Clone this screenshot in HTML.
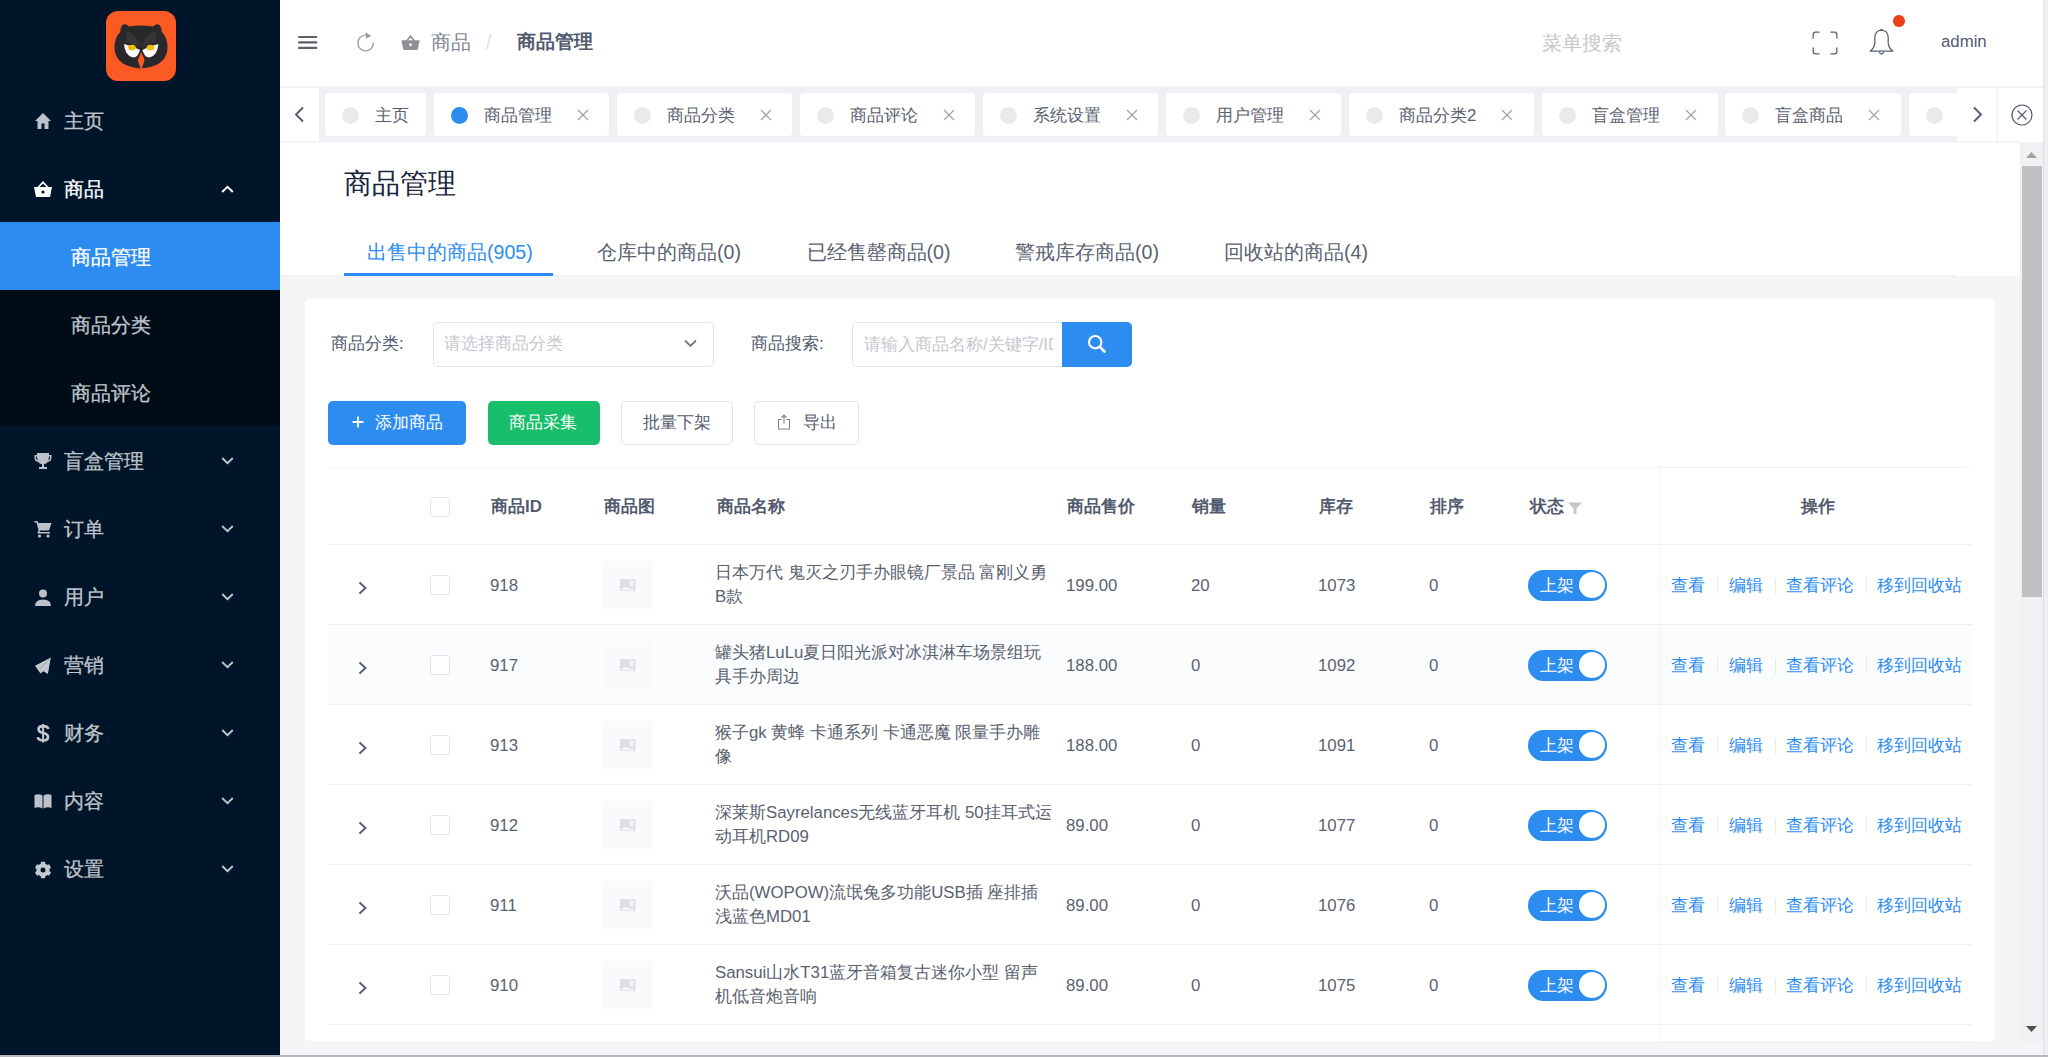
<!DOCTYPE html>
<html><head><meta charset="utf-8">
<style>
*{box-sizing:border-box;margin:0;padding:0}
html,body{width:2048px;height:1057px;overflow:hidden;background:#f5f5f8;font-family:"Liberation Sans",sans-serif;}
.a{position:absolute}
.t{position:absolute;white-space:nowrap;line-height:20px;}
svg{position:absolute;display:block}
/* sidebar */
#side{position:absolute;left:0;top:0;width:280px;height:1055px;background:#001529;}
.mi{position:absolute;left:64px;font-size:19.6px;color:#bfc3cb;-webkit-text-stroke:0.3px currentColor;}
.sub{position:absolute;left:71px;font-size:19.6px;color:#bfc3cb;-webkit-text-stroke:0.3px currentColor;}
.chev{position:absolute;left:221px;}
/* header */
#hdr{position:absolute;left:280px;top:0;width:1763px;height:88px;background:#fff;}
#tabsbar{position:absolute;left:280px;top:88px;width:1763px;height:53px;background:#f0f0f4;}
.tag{position:absolute;top:93px;height:43px;background:#fff;border-radius:4px;}
.tag .dot{position:absolute;left:17px;top:13.5px;width:17px;height:17px;border-radius:50%;background:#e8eaec;}
.tag .tx{position:absolute;top:13.2px;left:50px;font-size:16.8px;color:#5a6170;line-height:20px;white-space:nowrap}
.tag .x{position:absolute;top:16px;}
/* content */
#ctop{position:absolute;left:280px;top:142px;width:1740px;height:134px;background:#fff;}
#card{position:absolute;left:305px;top:299px;width:1690px;height:742px;background:#fff;border-radius:5px;}
.lbl{font-size:16.8px;color:#515a6e}
.btn{position:absolute;top:401px;height:44px;border-radius:5px;}
.th{font-size:16.8px;color:#515a6e;font-weight:bold}
.td{font-size:16.8px;color:#5a6170}
.row{position:absolute;left:328px;width:1644px;height:80px;border-bottom:1px solid #eeeff1;}
.cb{position:absolute;left:430px;width:20px;height:20px;border:1px solid #e4e6e9;border-radius:3px;background:#fff}
.img{position:absolute;left:603px;width:49px;height:48px;background:#fafafc;}
.sw{position:absolute;left:1528px;width:79px;height:31px;border-radius:16px;background:#2d8cf0;}
.sw .k{position:absolute;right:2px;top:2.5px;width:26px;height:26px;border-radius:50%;background:#fff}
.sw .tx{position:absolute;left:12px;top:6px;font-size:16.8px;line-height:20px;color:#fff}
.act{font-size:16.8px;color:#2d8cf0}
.sep{position:absolute;width:1px;height:16px;background:#e8eaec}
</style></head><body>

<!-- SIDEBAR -->
<div id="side">
  <div class="a" style="left:0;top:222px;width:280px;height:204px;background:#000c17"></div>
  <div class="a" style="left:0;top:222px;width:280px;height:68px;background:#2d8cf0"></div>
  <!-- logo -->
  <svg style="left:106px;top:11px" width="70" height="70" viewBox="0 0 70 70">
    <rect x="0" y="0" width="70" height="70" rx="12" fill="#fc5a24"/>
    <path d="M16 14.5 Q19 11.5 23 15.5 Q35 13.5 47 15.5 Q51 11.5 54 14.5 Q56 17.5 55.5 20.5 Q62 27 61.5 38 Q60 55.5 35 57.5 Q10 55.5 8.5 38 Q8 27 14.5 20.5 Q14 17.5 16 14.5Z" fill="#29292b"/>
    <path d="M22 20 Q30 24 34 36 Q30 33 20 31 Q19 25 22 20Z M48 20 Q40 24 36 36 Q40 33 50 31 Q51 25 48 20Z" fill="#353538"/>
    <path d="M18 33 Q26 35 34 39 Q32 46.5 27 46.5 Q19 45 18 33Z" fill="#fff"/>
    <path d="M52.4 33 Q44.4 35 36.4 39 Q38.4 46.5 43.4 46.5 Q51.4 45 52.4 33Z" fill="#fff"/>
    <ellipse cx="26" cy="36.6" rx="3.9" ry="2.9" fill="#f0bd0e"/>
    <ellipse cx="44.4" cy="36.6" rx="3.9" ry="2.9" fill="#f0bd0e"/>
    <path d="M35.2 41 L31.8 49 L35.2 59.5 L38.6 49Z" fill="#fc5a24"/>
  </svg>
  <!-- icons -->
  <svg style="left:34px;top:112px" width="18" height="18" viewBox="0 0 18 18"><path d="M9 1 L1 9 H3.5 V17 H7.5 V11.5 H10.5 V17 H14.5 V9 H17Z" fill="#bdc2ca"/></svg>
  <div class="t mi" style="top:111.2px">主页</div>
  <svg style="left:33px;top:180px" width="20" height="18" viewBox="0 0 20 18"><path d="M10 1 L4 7.5 H6 L10 3.5 L14 7.5 H16Z" fill="#fff"/><path d="M1 7 H19 L17 17 H3Z" fill="#fff"/><circle cx="10" cy="12" r="1.6" fill="#001529"/></svg>
  <div class="t mi" style="top:179.2px;color:#fff">商品</div>
  <svg class="chev" style="top:185px" width="13" height="8" viewBox="0 0 13 8"><path d="M1.2 7 L6.5 1.8 L11.8 7" stroke="#fff" stroke-width="2" fill="none"/></svg>
  <div class="t sub" style="top:246.7px;color:#fff">商品管理</div>
  <div class="t sub" style="top:314.7px">商品分类</div>
  <div class="t sub" style="top:382.7px">商品评论</div>

  <svg style="left:34px;top:452px" width="18" height="18" viewBox="0 0 18 18"><path d="M3 1 H15 V3 H17.5 V6 Q17.5 9.5 13.8 10 Q12.5 12 10 12.3 V15 H13 V17 H5 V15 H8 V12.3 Q5.5 12 4.2 10 Q0.5 9.5 0.5 6 V3 H3Z M2 4.5 V6 Q2 8 3.8 8.4 Q3 6.5 3 4.5Z M16 4.5 H15 Q15 6.5 14.2 8.4 Q16 8 16 6Z" fill="#bdc2ca" fill-rule="evenodd"/></svg>
  <div class="t mi" style="top:451.2px">盲盒管理</div>
  <svg style="left:34px;top:520px" width="18" height="18" viewBox="0 0 18 18"><path d="M0.5 1 H3.5 L4.3 3 H17.5 L15 10.5 H6.2 L5.5 12 H16 V13.5 H3.2 L4.6 10.3 L2.5 2.5 H0.5Z" fill="#bdc2ca"/><circle cx="5.5" cy="16" r="1.6" fill="#bdc2ca"/><circle cx="14" cy="16" r="1.6" fill="#bdc2ca"/></svg>
  <div class="t mi" style="top:519.2px">订单</div>
  <svg style="left:34px;top:589px" width="18" height="17" viewBox="0 0 18 17"><circle cx="9" cy="4.5" r="4" fill="#bdc2ca"/><path d="M1 17 Q1 10.5 9 10.5 Q17 10.5 17 17Z" fill="#bdc2ca"/></svg>
  <div class="t mi" style="top:587.2px">用户</div>
  <svg style="left:34px;top:657px" width="18" height="18" viewBox="0 0 18 18"><path d="M16.8 0.4 L1 8.8 L6.5 16.6 L9.4 14.3 L13.9 17Z" fill="#c3c7ce"/><path d="M16.5 0.8 L6.2 11.5" stroke="#8f96a2" stroke-width="0.7"/></svg>
  <div class="t mi" style="top:655.2px">营销</div>
  <svg style="left:34px;top:722px" width="18" height="22" viewBox="0 0 18 22"><path d="M14.3 7 Q13.8 4.2 9 4.2 Q4.6 4.2 4.6 7.3 Q4.6 10 9.2 11 Q14 12 14 15.2 Q14 18.4 9 18.4 Q4.2 18.4 3.8 15.2" stroke="#c3c7ce" stroke-width="2.7" fill="none"/><path d="M9.1 2 V20.5" stroke="#c3c7ce" stroke-width="2"/></svg>
  <div class="t mi" style="top:723.2px">财务</div>
  <svg style="left:34px;top:793px" width="18" height="16" viewBox="0 0 18 16"><path d="M0.5 2 Q4.5 0.5 8.5 2.5 V15.5 Q4.5 13.5 0.5 15Z M17.5 2 Q13.5 0.5 9.5 2.5 V15.5 Q13.5 13.5 17.5 15Z" fill="#bdc2ca"/></svg>
  <div class="t mi" style="top:791.2px">内容</div>
  <svg style="left:34px;top:861px" width="18" height="18" viewBox="0 0 18 18"><path d="M5.70 3.28 L6.74 2.80 L6.97 0.85 L11.03 0.85 L11.26 2.80 L12.30 3.28 L13.24 3.94 L15.04 3.16 L17.07 6.68 L15.50 7.85 L15.60 9.00 L15.50 10.15 L17.07 11.32 L15.04 14.84 L13.24 14.06 L12.30 14.72 L11.26 15.20 L11.03 17.15 L6.97 17.15 L6.74 15.20 L5.70 14.72 L4.76 14.06 L2.96 14.84 L0.93 11.32 L2.50 10.15 L2.40 9.00 L2.50 7.85 L0.93 6.68 L2.96 3.16 L4.76 3.94Z M11.5 9 A2.5 2.5 0 1 0 6.5 9 A2.5 2.5 0 1 0 11.5 9Z" fill="#c3c7ce" fill-rule="evenodd"/></svg>
  <div class="t mi" style="top:859.2px">设置</div>
  <!-- down chevrons -->
  <svg class="chev" style="top:457px" width="13" height="8" viewBox="0 0 13 8"><path d="M1.2 1 L6.5 6.2 L11.8 1" stroke="#bdc2ca" stroke-width="2" fill="none"/></svg>
  <svg class="chev" style="top:525px" width="13" height="8" viewBox="0 0 13 8"><path d="M1.2 1 L6.5 6.2 L11.8 1" stroke="#bdc2ca" stroke-width="2" fill="none"/></svg>
  <svg class="chev" style="top:593px" width="13" height="8" viewBox="0 0 13 8"><path d="M1.2 1 L6.5 6.2 L11.8 1" stroke="#bdc2ca" stroke-width="2" fill="none"/></svg>
  <svg class="chev" style="top:661px" width="13" height="8" viewBox="0 0 13 8"><path d="M1.2 1 L6.5 6.2 L11.8 1" stroke="#bdc2ca" stroke-width="2" fill="none"/></svg>
  <svg class="chev" style="top:729px" width="13" height="8" viewBox="0 0 13 8"><path d="M1.2 1 L6.5 6.2 L11.8 1" stroke="#bdc2ca" stroke-width="2" fill="none"/></svg>
  <svg class="chev" style="top:797px" width="13" height="8" viewBox="0 0 13 8"><path d="M1.2 1 L6.5 6.2 L11.8 1" stroke="#bdc2ca" stroke-width="2" fill="none"/></svg>
  <svg class="chev" style="top:865px" width="13" height="8" viewBox="0 0 13 8"><path d="M1.2 1 L6.5 6.2 L11.8 1" stroke="#bdc2ca" stroke-width="2" fill="none"/></svg>
</div>

<!-- HEADER -->
<div id="hdr"></div>
<!-- hamburger -->
<svg style="left:298px;top:35px" width="20" height="15" viewBox="0 0 20 15"><rect x="0" y="1" width="19.3" height="2.1" rx="1" fill="#5b6069"/><rect x="0" y="6.3" width="19.3" height="2.1" rx="1" fill="#5b6069"/><rect x="0" y="11.8" width="19.3" height="2.1" rx="1" fill="#5b6069"/></svg>
<!-- refresh -->
<svg style="left:356px;top:31px" width="20" height="21" viewBox="0 0 20 21"><path d="M9.6 4.2 A7.8 7.8 0 1 0 17.4 11.5" stroke="#989ba2" stroke-width="1.3" fill="none"/><path d="M9.5 1.3 L15.3 5 L9.9 7.8Z" fill="#989ba2"/></svg>
<!-- basket -->
<svg style="left:401px;top:34px" width="19" height="17" viewBox="0 0 19 17"><path d="M9.5 0.8 L4.8 6.8 H7 L9.5 3.6 L12 6.8 H14.2Z" fill="#8e9096"/><path d="M0.4 6.2 H18.6 L16.8 15.2 Q16.6 16 15.8 16 H3.2 Q2.4 16 2.2 15.2Z" fill="#8e9096"/><rect x="8.3" y="9.5" width="2.4" height="2.4" fill="#fff"/></svg>
<div class="t" style="left:431px;top:31.6px;font-size:19.6px;color:#808695">商品</div>
<div class="t" style="left:486px;top:31.6px;font-size:19.6px;color:#dcdee2">/</div>
<div class="t" style="left:517px;top:31.9px;font-size:19.2px;color:#515a6e;font-weight:bold">商品管理</div>
<div class="t" style="left:1542px;top:33px;font-size:19.6px;color:#c5c8ce">菜单搜索</div>
<!-- fullscreen -->
<svg style="left:1812px;top:31px" width="26" height="24" viewBox="0 0 26 24"><path d="M1.2 7.5 V3.5 Q1.2 1.2 3.5 1.2 H7.5 M18.5 1.2 H22.5 Q24.8 1.2 24.8 3.5 V7.5 M24.8 16.5 V20.5 Q24.8 22.8 22.5 22.8 H18.5 M7.5 22.8 H3.5 Q1.2 22.8 1.2 20.5 V16.5" stroke="#5a6172" stroke-width="1.3" fill="none"/></svg>
<!-- bell -->
<svg style="left:1868px;top:28px" width="27" height="29" viewBox="0 0 27 29"><path d="M13.5 2.2 Q19.8 2.6 20.2 9.5 V15 Q20.6 20 24.8 23.2 H2.2 Q6.4 20 6.8 15 V9.5 Q7.2 2.6 13.5 2.2Z" stroke="#5a6172" stroke-width="1.3" fill="none" stroke-linejoin="round"/><path d="M11.2 24.2 Q13.5 27.8 15.8 24.2" stroke="#5a6172" stroke-width="1.3" fill="none"/><circle cx="13.5" cy="2" r="1.3" fill="#5a6172"/></svg>
<div class="a" style="left:1893.2px;top:15.2px;width:11.6px;height:11.6px;border-radius:50%;background:#ed4014"></div>
<div class="t" style="left:1941px;top:32.2px;font-size:16.8px;color:#515a6e">admin</div>


<!-- TABS BAR -->
<div id="tabsbar"></div>
<div class="a" style="left:280px;top:86px;width:1763px;height:2px;background:#f4f4f6"></div>

<div class="a" style="left:280px;top:88px;width:39px;height:54px;background:#fff"></div>
<svg style="left:293px;top:106px" width="13" height="17" viewBox="0 0 13 17"><path d="M10 1.5 L3 8.5 L10 15.5" stroke="#515a6e" stroke-width="1.9" fill="none"/></svg>
<div class="tag" style="left:325px;width:101px"><div class="dot"></div><div class="tx">主页</div></div>
<div class="tag" style="left:434px;width:175px"><div class="dot" style="background:#2d8cf0"></div><div class="tx">商品管理</div><svg class="x" style="left:143px" width="12" height="12" viewBox="0 0 12 12"><path d="M1 1 L11 11 M11 1 L1 11" stroke="#a0a4ad" stroke-width="1.3"/></svg></div>
<div class="tag" style="left:617px;width:175px"><div class="dot"></div><div class="tx">商品分类</div><svg class="x" style="left:143px" width="12" height="12" viewBox="0 0 12 12"><path d="M1 1 L11 11 M11 1 L1 11" stroke="#a0a4ad" stroke-width="1.3"/></svg></div>
<div class="tag" style="left:800px;width:175px"><div class="dot"></div><div class="tx">商品评论</div><svg class="x" style="left:143px" width="12" height="12" viewBox="0 0 12 12"><path d="M1 1 L11 11 M11 1 L1 11" stroke="#a0a4ad" stroke-width="1.3"/></svg></div>
<div class="tag" style="left:983px;width:175px"><div class="dot"></div><div class="tx">系统设置</div><svg class="x" style="left:143px" width="12" height="12" viewBox="0 0 12 12"><path d="M1 1 L11 11 M11 1 L1 11" stroke="#a0a4ad" stroke-width="1.3"/></svg></div>
<div class="tag" style="left:1166px;width:175px"><div class="dot"></div><div class="tx">用户管理</div><svg class="x" style="left:143px" width="12" height="12" viewBox="0 0 12 12"><path d="M1 1 L11 11 M11 1 L1 11" stroke="#a0a4ad" stroke-width="1.3"/></svg></div>
<div class="tag" style="left:1349px;width:185px"><div class="dot"></div><div class="tx">商品分类2</div><svg class="x" style="left:152px" width="12" height="12" viewBox="0 0 12 12"><path d="M1 1 L11 11 M11 1 L1 11" stroke="#a0a4ad" stroke-width="1.3"/></svg></div>
<div class="tag" style="left:1542px;width:176px"><div class="dot"></div><div class="tx">盲盒管理</div><svg class="x" style="left:143px" width="12" height="12" viewBox="0 0 12 12"><path d="M1 1 L11 11 M11 1 L1 11" stroke="#a0a4ad" stroke-width="1.3"/></svg></div>
<div class="tag" style="left:1725px;width:176px"><div class="dot"></div><div class="tx">盲盒商品</div><svg class="x" style="left:143px" width="12" height="12" viewBox="0 0 12 12"><path d="M1 1 L11 11 M11 1 L1 11" stroke="#a0a4ad" stroke-width="1.3"/></svg></div>
<div class="tag" style="left:1909px;width:175px"><div class="dot"></div></div>
<div class="a" style="left:1957px;top:88px;width:86px;height:54px;background:#fff"></div>
<div class="a" style="left:1996px;top:88px;width:2px;height:54px;background:#f5f6f8"></div>
<svg style="left:1971px;top:106px" width="13" height="17" viewBox="0 0 13 17"><path d="M3 1.5 L10 8.5 L3 15.5" stroke="#515a6e" stroke-width="1.9" fill="none"/></svg>
<svg style="left:2011px;top:104px" width="22" height="22" viewBox="0 0 22 22"><circle cx="11" cy="11" r="10" stroke="#515a6e" stroke-width="1.2" fill="none"/><path d="M6.5 6.5 L15.5 15.5 M15.5 6.5 L6.5 15.5" stroke="#515a6e" stroke-width="1.2"/></svg>


<!-- CONTENT -->
<div id="ctop"></div>
<div class="a" style="left:280px;top:141px;width:1740px;height:2px;background:#f5f5f7"></div>
<div class="t" style="left:344px;top:174.3px;font-size:28px;color:#17233d">商品管理</div>
<div class="t" style="left:367px;top:242.2px;font-size:19.6px;color:#2d8cf0">出售中的商品(905)</div>
<div class="t" style="left:597px;top:242.2px;font-size:19.6px;color:#5a6170">仓库中的商品(0)</div>
<div class="t" style="left:806.5px;top:242.2px;font-size:19.6px;color:#5a6170">已经售罄商品(0)</div>
<div class="t" style="left:1015px;top:242.2px;font-size:19.6px;color:#5a6170">警戒库存商品(0)</div>
<div class="t" style="left:1224px;top:242.2px;font-size:19.6px;color:#5a6170">回收站的商品(4)</div>
<div class="a" style="left:280px;top:275px;width:1675px;height:1px;background:#eeeef1"></div>
<div class="a" style="left:344px;top:273px;width:209px;height:3px;background:#2d8cf0"></div>
<div id="card"></div>
<div class="t lbl" style="left:331px;top:334.4px">商品分类:</div>
<div class="a" style="left:433px;top:322px;width:281px;height:45px;border:1px solid #e1e3e6;border-radius:5px;background:#fff"></div>
<div class="t" style="left:444px;top:334.4px;font-size:16.8px;color:#c5c8ce">请选择商品分类</div>
<svg style="left:683px;top:338px" width="15" height="11" viewBox="0 0 15 11"><path d="M2 2.5 L7.5 8 L13 2.5" stroke="#74777e" stroke-width="1.8" fill="none"/></svg>
<div class="t lbl" style="left:751px;top:334.4px">商品搜索:</div>
<div class="a" style="left:852px;top:322px;width:215px;height:45px;border:1px solid #e1e3e6;border-radius:5px 0 0 5px;background:#fff;overflow:hidden"><div class="t" style="left:11px;top:12.4px;font-size:16.8px;color:#c5c8ce;width:189px;overflow:hidden">请输入商品名称/关键字/ID</div></div>
<div class="a" style="left:1062px;top:322px;width:70px;height:45px;border-radius:0 5px 5px 0;background:#2d8cf0"></div>
<svg style="left:1087px;top:334px" width="20" height="20" viewBox="0 0 20 20"><circle cx="8.2" cy="8.2" r="6.2" stroke="#fff" stroke-width="2.2" fill="none"/><path d="M12.8 12.8 L17.5 17.5" stroke="#fff" stroke-width="2.6" stroke-linecap="round"/></svg>
<div class="btn" style="left:328px;width:138px;background:#2d8cf0"></div>
<svg style="left:352px;top:416px" width="12" height="12" viewBox="0 0 12 12"><path d="M6 0.5 V11.5 M0.5 6 H11.5" stroke="#fff" stroke-width="1.8"/></svg>
<div class="t" style="left:375px;top:413.2px;font-size:16.8px;color:#fff">添加商品</div>
<div class="btn" style="left:488px;width:112px;background:#19be6b"></div>
<div class="t" style="left:509px;top:413.2px;font-size:16.8px;color:#fff">商品采集</div>
<div class="btn" style="left:621px;width:112px;border:1px solid #e1e3e6;background:#fff"></div>
<div class="t" style="left:643px;top:413.2px;font-size:16.8px;color:#515a6e">批量下架</div>
<div class="btn" style="left:754px;width:105px;border:1px solid #e1e3e6;background:#fff"></div>
<svg style="left:777px;top:414px" width="14" height="16" viewBox="0 0 14 16"><path d="M4.5 5.5 H1.5 V15 H12.5 V5.5 H9.5 M7 10 V1 M4.5 3.5 L7 1 L9.5 3.5" stroke="#808695" stroke-width="1.1" fill="none"/></svg>
<div class="t" style="left:803px;top:413.2px;font-size:16.8px;color:#515a6e">导出</div>
<div class="row" style="top:468px;height:77px;background:#fff"></div>
<div class="a" style="left:328px;top:467px;width:1644px;height:1px;background:#f6f6f8"></div>
<div class="cb" style="top:497px"></div>
<div class="t th" style="left:491px;top:497.2px">商品ID</div>
<div class="t th" style="left:604px;top:497.2px">商品图</div>
<div class="t th" style="left:717px;top:497.2px">商品名称</div>
<div class="t th" style="left:1067px;top:497.2px">商品售价</div>
<div class="t th" style="left:1192px;top:497.2px">销量</div>
<div class="t th" style="left:1319px;top:497.2px">库存</div>
<div class="t th" style="left:1430px;top:497.2px">排序</div>
<div class="t th" style="left:1530px;top:497.2px">状态</div>
<svg style="left:1567px;top:501px" width="16" height="14" viewBox="0 0 16 14"><path d="M1 1.5 H15 L9.5 7.5 V13 H6.5 V7.5Z" fill="#c5c8ce"/></svg>
<div class="row" style="top:545px;background:#fff"></div>
<svg style="left:357px;top:581px" width="12" height="14" viewBox="0 0 12 14"><path d="M2.5 1.5 L8.5 7 L2.5 12.5" stroke="#515a6e" stroke-width="1.8" fill="none"/></svg>
<div class="cb" style="top:575px"></div>
<div class="t td" style="left:490px;top:576.18px">918</div>
<div class="img" style="top:561px"></div>
<svg style="left:620px;top:579px" width="16" height="12" viewBox="0 0 16 12"><rect x="0" y="0" width="15.5" height="12" fill="#dfe0e4"/><path d="M1.5 11 Q4 6 9 9.5 L14 10.5 V11 Z M10 1.5 H13.5 V7 H10Z" fill="#f5f5f7"/></svg>
<div class="t td" style="left:715px;top:563.18px">日本万代 鬼灭之刃手办眼镜厂景品 富刚义勇</div>
<div class="t td" style="left:715px;top:587.18px">B款</div>
<div class="t td" style="left:1066px;top:576.18px">199.00</div>
<div class="t td" style="left:1191px;top:576.18px">20</div>
<div class="t td" style="left:1318px;top:576.18px">1073</div>
<div class="t td" style="left:1429px;top:576.18px">0</div>
<div class="sw" style="top:569.5px"><div class="tx">上架</div><div class="k"></div></div>
<div class="row" style="top:625px;background:#fbfcfe"></div>
<svg style="left:357px;top:661px" width="12" height="14" viewBox="0 0 12 14"><path d="M2.5 1.5 L8.5 7 L2.5 12.5" stroke="#515a6e" stroke-width="1.8" fill="none"/></svg>
<div class="cb" style="top:655px"></div>
<div class="t td" style="left:490px;top:656.18px">917</div>
<div class="img" style="top:641px"></div>
<svg style="left:620px;top:659px" width="16" height="12" viewBox="0 0 16 12"><rect x="0" y="0" width="15.5" height="12" fill="#dfe0e4"/><path d="M1.5 11 Q4 6 9 9.5 L14 10.5 V11 Z M10 1.5 H13.5 V7 H10Z" fill="#f5f5f7"/></svg>
<div class="t td" style="left:715px;top:643.18px">罐头猪LuLu夏日阳光派对冰淇淋车场景组玩</div>
<div class="t td" style="left:715px;top:667.18px">具手办周边</div>
<div class="t td" style="left:1066px;top:656.18px">188.00</div>
<div class="t td" style="left:1191px;top:656.18px">0</div>
<div class="t td" style="left:1318px;top:656.18px">1092</div>
<div class="t td" style="left:1429px;top:656.18px">0</div>
<div class="sw" style="top:649.5px"><div class="tx">上架</div><div class="k"></div></div>
<div class="row" style="top:705px;background:#fff"></div>
<svg style="left:357px;top:741px" width="12" height="14" viewBox="0 0 12 14"><path d="M2.5 1.5 L8.5 7 L2.5 12.5" stroke="#515a6e" stroke-width="1.8" fill="none"/></svg>
<div class="cb" style="top:735px"></div>
<div class="t td" style="left:490px;top:736.18px">913</div>
<div class="img" style="top:721px"></div>
<svg style="left:620px;top:739px" width="16" height="12" viewBox="0 0 16 12"><rect x="0" y="0" width="15.5" height="12" fill="#dfe0e4"/><path d="M1.5 11 Q4 6 9 9.5 L14 10.5 V11 Z M10 1.5 H13.5 V7 H10Z" fill="#f5f5f7"/></svg>
<div class="t td" style="left:715px;top:723.18px">猴子gk 黄蜂 卡通系列 卡通恶魔 限量手办雕</div>
<div class="t td" style="left:715px;top:747.18px">像</div>
<div class="t td" style="left:1066px;top:736.18px">188.00</div>
<div class="t td" style="left:1191px;top:736.18px">0</div>
<div class="t td" style="left:1318px;top:736.18px">1091</div>
<div class="t td" style="left:1429px;top:736.18px">0</div>
<div class="sw" style="top:729.5px"><div class="tx">上架</div><div class="k"></div></div>
<div class="row" style="top:785px;background:#fff"></div>
<svg style="left:357px;top:821px" width="12" height="14" viewBox="0 0 12 14"><path d="M2.5 1.5 L8.5 7 L2.5 12.5" stroke="#515a6e" stroke-width="1.8" fill="none"/></svg>
<div class="cb" style="top:815px"></div>
<div class="t td" style="left:490px;top:816.18px">912</div>
<div class="img" style="top:801px"></div>
<svg style="left:620px;top:819px" width="16" height="12" viewBox="0 0 16 12"><rect x="0" y="0" width="15.5" height="12" fill="#dfe0e4"/><path d="M1.5 11 Q4 6 9 9.5 L14 10.5 V11 Z M10 1.5 H13.5 V7 H10Z" fill="#f5f5f7"/></svg>
<div class="t td" style="left:715px;top:803.18px">深莱斯Sayrelances无线蓝牙耳机 50挂耳式运</div>
<div class="t td" style="left:715px;top:827.18px">动耳机RD09</div>
<div class="t td" style="left:1066px;top:816.18px">89.00</div>
<div class="t td" style="left:1191px;top:816.18px">0</div>
<div class="t td" style="left:1318px;top:816.18px">1077</div>
<div class="t td" style="left:1429px;top:816.18px">0</div>
<div class="sw" style="top:809.5px"><div class="tx">上架</div><div class="k"></div></div>
<div class="row" style="top:865px;background:#fff"></div>
<svg style="left:357px;top:901px" width="12" height="14" viewBox="0 0 12 14"><path d="M2.5 1.5 L8.5 7 L2.5 12.5" stroke="#515a6e" stroke-width="1.8" fill="none"/></svg>
<div class="cb" style="top:895px"></div>
<div class="t td" style="left:490px;top:896.18px">911</div>
<div class="img" style="top:881px"></div>
<svg style="left:620px;top:899px" width="16" height="12" viewBox="0 0 16 12"><rect x="0" y="0" width="15.5" height="12" fill="#dfe0e4"/><path d="M1.5 11 Q4 6 9 9.5 L14 10.5 V11 Z M10 1.5 H13.5 V7 H10Z" fill="#f5f5f7"/></svg>
<div class="t td" style="left:715px;top:883.18px">沃品(WOPOW)流氓兔多功能USB插 座排插</div>
<div class="t td" style="left:715px;top:907.18px">浅蓝色MD01</div>
<div class="t td" style="left:1066px;top:896.18px">89.00</div>
<div class="t td" style="left:1191px;top:896.18px">0</div>
<div class="t td" style="left:1318px;top:896.18px">1076</div>
<div class="t td" style="left:1429px;top:896.18px">0</div>
<div class="sw" style="top:889.5px"><div class="tx">上架</div><div class="k"></div></div>
<div class="row" style="top:945px;background:#fff"></div>
<svg style="left:357px;top:981px" width="12" height="14" viewBox="0 0 12 14"><path d="M2.5 1.5 L8.5 7 L2.5 12.5" stroke="#515a6e" stroke-width="1.8" fill="none"/></svg>
<div class="cb" style="top:975px"></div>
<div class="t td" style="left:490px;top:976.18px">910</div>
<div class="img" style="top:961px"></div>
<svg style="left:620px;top:979px" width="16" height="12" viewBox="0 0 16 12"><rect x="0" y="0" width="15.5" height="12" fill="#dfe0e4"/><path d="M1.5 11 Q4 6 9 9.5 L14 10.5 V11 Z M10 1.5 H13.5 V7 H10Z" fill="#f5f5f7"/></svg>
<div class="t td" style="left:715px;top:963.18px">Sansui山水T31蓝牙音箱复古迷你小型 留声</div>
<div class="t td" style="left:715px;top:987.18px">机低音炮音响</div>
<div class="t td" style="left:1066px;top:976.18px">89.00</div>
<div class="t td" style="left:1191px;top:976.18px">0</div>
<div class="t td" style="left:1318px;top:976.18px">1075</div>
<div class="t td" style="left:1429px;top:976.18px">0</div>
<div class="sw" style="top:969.5px"><div class="tx">上架</div><div class="k"></div></div>
<div class="a" style="left:1662px;top:468px;width:310px;height:573px;background:transparent;box-shadow:-2px 0 4px rgba(0,0,0,0.04)"></div>
<div class="t th" style="left:1801px;top:497.2px">操作</div>
<div class="t act" style="left:1671px;top:576.2px">查看</div>
<div class="sep" style="left:1717px;top:578px"></div>
<div class="t act" style="left:1729px;top:576.2px">编辑</div>
<div class="sep" style="left:1774.5px;top:578px"></div>
<div class="t act" style="left:1786px;top:576.2px">查看评论</div>
<div class="sep" style="left:1865.5px;top:578px"></div>
<div class="t act" style="left:1877px;top:576.2px">移到回收站</div>
<div class="t act" style="left:1671px;top:656.2px">查看</div>
<div class="sep" style="left:1717px;top:658px"></div>
<div class="t act" style="left:1729px;top:656.2px">编辑</div>
<div class="sep" style="left:1774.5px;top:658px"></div>
<div class="t act" style="left:1786px;top:656.2px">查看评论</div>
<div class="sep" style="left:1865.5px;top:658px"></div>
<div class="t act" style="left:1877px;top:656.2px">移到回收站</div>
<div class="t act" style="left:1671px;top:736.2px">查看</div>
<div class="sep" style="left:1717px;top:738px"></div>
<div class="t act" style="left:1729px;top:736.2px">编辑</div>
<div class="sep" style="left:1774.5px;top:738px"></div>
<div class="t act" style="left:1786px;top:736.2px">查看评论</div>
<div class="sep" style="left:1865.5px;top:738px"></div>
<div class="t act" style="left:1877px;top:736.2px">移到回收站</div>
<div class="t act" style="left:1671px;top:816.2px">查看</div>
<div class="sep" style="left:1717px;top:818px"></div>
<div class="t act" style="left:1729px;top:816.2px">编辑</div>
<div class="sep" style="left:1774.5px;top:818px"></div>
<div class="t act" style="left:1786px;top:816.2px">查看评论</div>
<div class="sep" style="left:1865.5px;top:818px"></div>
<div class="t act" style="left:1877px;top:816.2px">移到回收站</div>
<div class="t act" style="left:1671px;top:896.2px">查看</div>
<div class="sep" style="left:1717px;top:898px"></div>
<div class="t act" style="left:1729px;top:896.2px">编辑</div>
<div class="sep" style="left:1774.5px;top:898px"></div>
<div class="t act" style="left:1786px;top:896.2px">查看评论</div>
<div class="sep" style="left:1865.5px;top:898px"></div>
<div class="t act" style="left:1877px;top:896.2px">移到回收站</div>
<div class="t act" style="left:1671px;top:976.2px">查看</div>
<div class="sep" style="left:1717px;top:978px"></div>
<div class="t act" style="left:1729px;top:976.2px">编辑</div>
<div class="sep" style="left:1774.5px;top:978px"></div>
<div class="t act" style="left:1786px;top:976.2px">查看评论</div>
<div class="sep" style="left:1865.5px;top:978px"></div>
<div class="t act" style="left:1877px;top:976.2px">移到回收站</div>
<div class="a" style="left:2020px;top:142px;width:23px;height:900px;background:#f1f1f3"></div>
<div class="a" style="left:2022px;top:166px;width:20px;height:431px;background:#c1c1c4"></div>
<svg style="left:2025px;top:151px" width="13" height="8" viewBox="0 0 13 8"><path d="M1 7 L6.5 1 L12 7Z" fill="#a3a3a6"/></svg>
<svg style="left:2025px;top:1025px" width="13" height="8" viewBox="0 0 13 8"><path d="M1 1 L6.5 7 L12 1Z" fill="#505050"/></svg>
<div class="a" style="left:2043px;top:0;width:5px;height:1055px;background:#efeff2;border-left:1px solid #e2e2e6"></div>

<div class="a" style="left:0;top:1055px;width:2048px;height:2px;background:#b9b6bd"></div>
</body></html>
